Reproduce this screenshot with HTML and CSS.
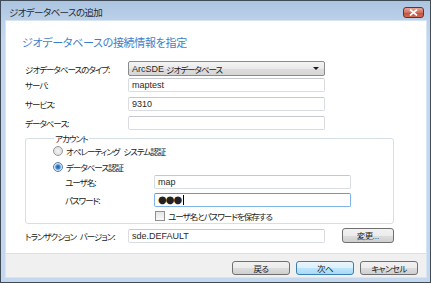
FILE: index.html
```html
<!DOCTYPE html>
<html lang="ja">
<head>
<meta charset="utf-8">
<title>ジオデータベースの追加</title>
<link rel="stylesheet" href="styles.css">
</head>
<body>
<div class="window">
  <div class="titlebar">
    <span class="title">ジオデータベースの追加</span>
    <span class="close"><svg width="9" height="7" viewBox="0 0 9 7"><path d="M1 0.5L8 6.5M8 0.5L1 6.5" stroke="#fff" stroke-width="1.7"/></svg></span>
  </div>
  <div class="client">
    <div class="content">
      <div class="heading">ジオデータベースの接続情報を指定</div>
      <div class="row row-first">
        <span class="label">ジオデータベースのタイプ:</span>
        <div class="select"><span class="latin">ArcSDE</span><span class="gap"></span>ジオデータベース<span class="arrow"></span></div>
      </div>
      <div class="row row-second">
        <span class="label">サーバ:</span>
        <div class="input"><span class="latin">maptest</span></div>
      </div>
      <div class="row">
        <span class="label">サービス:</span>
        <div class="input"><span class="latin">9310</span></div>
      </div>
      <div class="row">
        <span class="label">データベース:</span>
        <div class="input"></div>
      </div>
      <fieldset class="group">
        <legend>アカウント</legend>
        <div class="opt"><span class="radio"></span>オペレーティング システム認証</div>
        <div class="opt"><span class="radio checked"></span>データベース認証</div>
        <div class="cred cred-first">
          <span class="label">ユーザ名:</span>
          <div class="input"><span class="latin">map</span></div>
        </div>
        <div class="cred">
          <span class="label">パスワード:</span>
          <div class="input focus"><span class="dots">●●●</span><span class="caret"></span></div>
        </div>
        <div class="check-row"><span class="check"></span>ユーザ名とパスワードを保存する</div>
      </fieldset>
      <div class="row trans">
        <span class="label">トランザクション バージョン:</span>
        <div class="input"><span class="latin">sde.DEFAULT</span></div>
        <button class="btn change">変更<span class="latin">...</span></button>
      </div>
    </div>
    <div class="footer">
      <button class="btn">戻る</button>
      <button class="btn default">次へ</button>
      <button class="btn">キャンセル</button>
    </div>
  </div>
</div>
</body>
</html>
```

FILE: styles.css
```css
html, body {
  margin: 0;
  padding: 0;
  background: #fff;
}
body {
  font-family: "Noto Sans CJK JP", "Liberation Sans", sans-serif;
  font-size: 8.5px;
  letter-spacing: -1px;
  word-spacing: 3px;
  font-feature-settings: "palt";
  color: #222;
}
.window {
  box-sizing: border-box;
  width: 431px;
  height: 283px;
  border: 1px solid #3f4b57;
  background: linear-gradient(#abc4e0 0px, #bcd1e9 20px, #c3d7ee 40px, #c3d7ee 100%);
  padding: 0 4px 5px 5px;
  display: flex;
  flex-direction: column;
}
.titlebar {
  height: 20px;
  display: flex;
  align-items: center;
  justify-content: space-between;
}
.title {
  font-size: 9.5px;
  letter-spacing: -0.6px;
  margin-left: 3px;
  margin-top: 2px;
  color: #1e2a38;
}
.close {
  width: 21px;
  height: 11px;
  box-sizing: border-box;
  border: 1px solid #6d2e28;
  border-radius: 3px;
  background: linear-gradient(#e8a69a, #d0705f 50%, #c24c3a 51%, #cf6d55);
  display: flex;
  align-items: center;
  justify-content: center;
  margin-right: 2px;
  margin-top: 2px;
}
.client {
  flex: 1;
  background: #fff;
  display: flex;
  flex-direction: column;
  outline: 1px solid #d7e4f2;
}
.content {
  flex: 1;
  padding: 14px 0 0 16px;
}
.heading {
  font-size: 11px;
  letter-spacing: -0.3px;
  line-height: 14px;
  color: #3d7fcb;
}
.row {
  display: flex;
  align-items: center;
  height: 14px;
  margin-top: 5px;
  margin-left: 3px;
}
.row-first {
  margin-top: 12px;
  height: 15px;
}
.row-second {
  margin-top: 2px;
}
.label {
  width: 103px;
  flex: none;
  line-height: 12px;
  white-space: nowrap;
}
.latin {
  font-family: "Liberation Sans", "DejaVu Sans", sans-serif;
  font-size: 9px;
  letter-spacing: 0;
  color: #2a2a2a;
}
.gap {
  width: 2px;
}
.select {
  box-sizing: border-box;
  width: 197px;
  height: 15px;
  border: 1px solid #8a8a8a;
  border-radius: 2px;
  background: linear-gradient(#f4f4f4, #e9e9e9 50%, #dcdcdc 51%, #d7d7d7);
  display: flex;
  align-items: center;
  padding-left: 3px;
  line-height: 12px;
}
.arrow {
  margin-left: auto;
  margin-right: 5px;
  width: 0;
  height: 0;
  border-left: 3px solid transparent;
  border-right: 3px solid transparent;
  border-top: 3px solid #1a1a1a;
}
.input {
  box-sizing: border-box;
  width: 197px;
  height: 14px;
  border: 1px solid #d9dde3;
  border-top-color: #c5c9cf;
  border-radius: 2px;
  display: flex;
  align-items: center;
  padding-left: 3px;
  line-height: 12px;
  background: #fff;
}
.group {
  margin: 2px 0 0 3px;
  width: 369px;
  box-sizing: border-box;
  border: 1px solid #d5dfe5;
  border-radius: 3px;
  padding: 0 0 1px 27px;
}
.group legend {
  padding: 0 1px;
  margin-left: 1px;
  line-height: 12px;
}
.opt {
  display: flex;
  align-items: center;
  height: 12px;
  margin-top: 1px;
  white-space: pre;
}
.opt + .opt {
  margin-top: 4px;
}
.radio {
  box-sizing: border-box;
  width: 10px;
  height: 10px;
  border-radius: 50%;
  border: 1px solid #989898;
  background: radial-gradient(circle, #f4f4f4, #d8d8d8);
  margin-right: 3px;
}
.radio.checked {
  border-color: #5a7ea0;
  background: radial-gradient(circle, #1d5fa8 0, #3c86cf 2px, #a9cdee 3px, #eef4fa 4px);
}
.cred {
  display: flex;
  align-items: center;
  height: 14px;
  margin-top: 4px;
  margin-left: 12px;
}
.cred-first {
  margin-top: 2px;
}
.cred .label {
  width: 89px;
}
.input.focus {
  border-color: #7eb4ea;
  border-top-color: #569de5;
}
.dots {
  font-family: "DejaVu Sans", sans-serif;
  font-size: 10px;
  letter-spacing: -1px;
}
.caret {
  width: 1px;
  height: 10px;
  background: #000;
  margin-left: 2px;
}
.check-row {
  display: flex;
  align-items: center;
  height: 12px;
  margin: 3px 0 0 102px;
}
.check {
  box-sizing: border-box;
  width: 10px;
  height: 10px;
  border: 1px solid #8e8f8f;
  background: linear-gradient(#e6e6e6, #f8f8f8);
  margin-right: 3px;
}
.trans {
  margin-top: 4px;
  height: 15px;
}
.btn {
  box-sizing: border-box;
  font-family: "Noto Sans CJK JP", sans-serif;
  font-feature-settings: "palt";
  font-size: 8.5px;
  letter-spacing: -0.6px;
  line-height: 11px;
  color: #222;
  height: 14px;
  width: 58px;
  padding: 0;
  border: 1px solid #707070;
  border-radius: 3px;
  background: linear-gradient(#f2f2f2, #ebebeb 50%, #dddddd 51%, #cfcfcf);
}
.btn .latin {
  font-size: 8px;
}
.btn.change {
  width: 52px;
  height: 15px;
  margin-left: 17px;
}
.btn.default {
  border-color: #3c7fb1;
  background: linear-gradient(#eaf6fd, #d9f0fc 50%, #bee6fd 51%, #a7d9f5);
}
.footer {
  height: 24px;
  box-sizing: border-box;
  background: #f0f0f0;
  border-top: 1px solid #dfdfdf;
  display: flex;
  justify-content: flex-end;
  gap: 6px;
  padding: 7px 8px 0 0;
}
```
